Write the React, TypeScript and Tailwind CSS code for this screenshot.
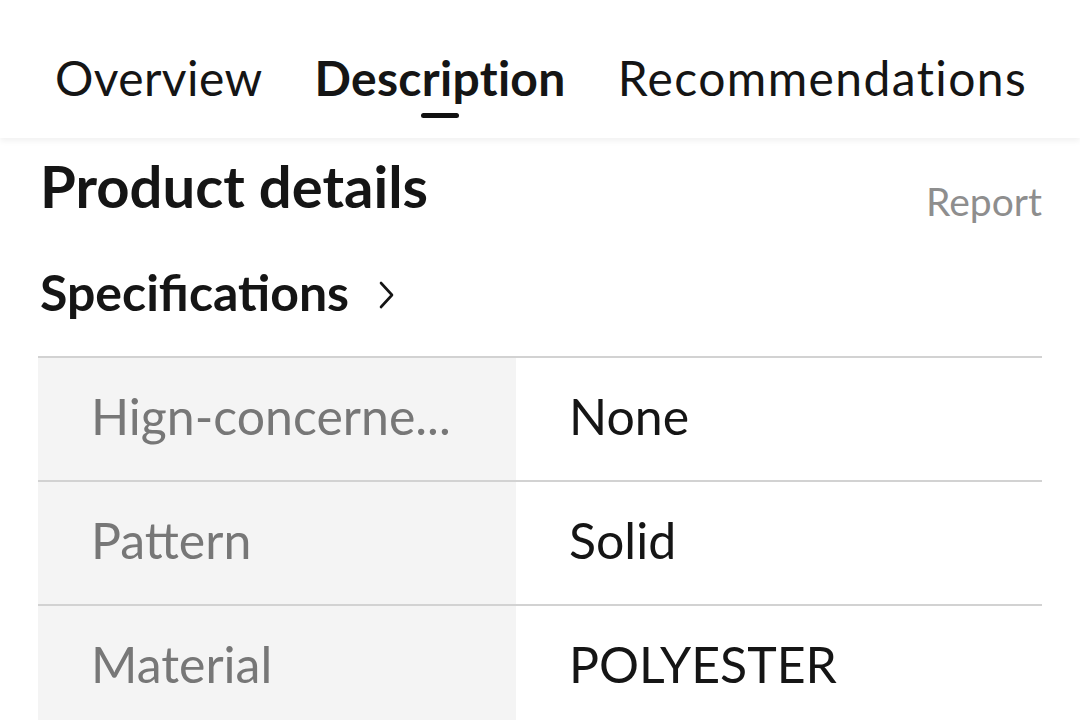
import React from "react";

const TABS = [
  { label: "Overview", active: false, track: "tracking-[0.4px]" },
  { label: "Description", active: true, track: "tracking-[0.3px]" },
  { label: "Recommendations", active: false, track: "tracking-[1.4px]" },
];

const SPECS = [
  { name: "Hign-concerne...", value: "None" },
  { name: "Pattern", value: "Solid" },
  { name: "Material", value: "POLYESTER" },
];

export default function App() {
  return (
    <div
      className="w-[1080px] h-[720px] overflow-hidden bg-white text-[#151515]"
      style={{ fontFamily: "Lato, 'Noto Sans', sans-serif" }}
    >
      {/* tab bar */}
      <div className="h-[138px] bg-white shadow-[0_3px_6px_rgba(0,0,0,0.06)] relative z-10 flex pl-[55px] gap-[52px]">
        {TABS.map((tab) => (
          <div key={tab.label} className="flex flex-col items-center pt-[54px]">
            <span
              className={`text-[48px] leading-[48px] whitespace-nowrap ${tab.track} ${
                tab.active ? "font-bold" : "font-normal"
              }`}
            >
              {tab.label}
            </span>
            {tab.active && <div className="mt-[11px] w-[38px] h-[5px] rounded-full bg-[#111]" />}
          </div>
        ))}
      </div>

      <div className="pl-[38px] pr-[38px]">
        <div className="flex justify-between items-start h-[64px] mt-[19px]">
          <h1 className="pl-[2px] text-[58px] leading-[58px] font-bold">Product details</h1>
          <span className="mt-[25px] text-[39px] leading-[39px] text-[#8e8e8e]">Report</span>
        </div>

        <div className="mt-[46px] pl-[2px] flex items-center gap-[29px]">
          <span className="text-[50px] leading-[50px] font-bold">Specifications</span>
          <svg width="16" height="28" viewBox="0 0 16 28" fill="none" className="mt-[5px]">
            <path d="M3 2l11 12L3 26" stroke="#151515" strokeWidth="2.6" strokeLinecap="round" strokeLinejoin="round" />
          </svg>
        </div>

        <div className="mt-[39px]">
          {SPECS.map((row) => (
            <div key={row.name} className="border-t-2 border-[#d2d2d2] grid grid-cols-[478px_1fr] h-[124px]">
              <div className="bg-[#f4f4f4] pl-[53px] pt-[33px] text-[50px] leading-[50px] text-[#777]">
                {row.name}
              </div>
              <div className="pl-[53px] pt-[33px] text-[50px] leading-[50px] text-[#151515]">{row.value}</div>
            </div>
          ))}
        </div>
      </div>
    </div>
  );
}
